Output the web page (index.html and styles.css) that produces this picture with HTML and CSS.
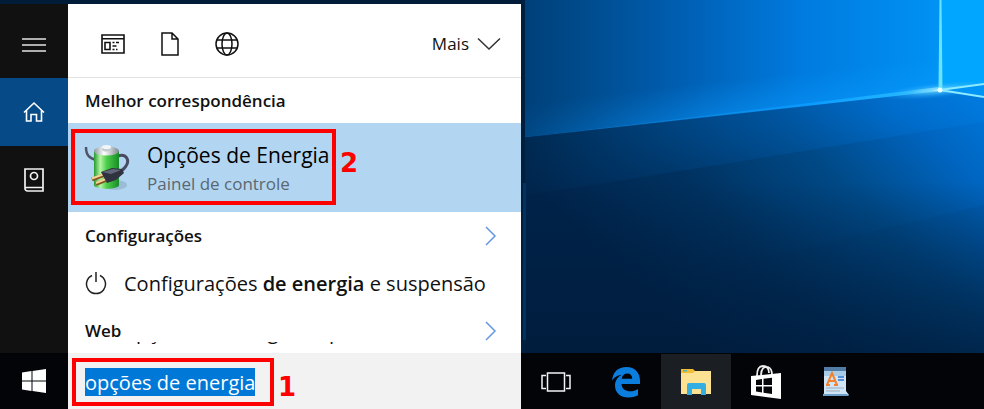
FILE: index.html
```html
<!DOCTYPE html>
<html lang="pt-BR">
<head>
    <meta charset="UTF-8">
    <meta name="viewport" content="width=device-width, initial-scale=1.0">
    <title>Opções de Energia</title>
    <link rel="stylesheet" href="styles.css">
</head>
<body>

    <main class="desktop">
        <section class="start-menu">
            <nav class="sidebar">
                <button type="button" class="side-button menu-button" aria-label="Menu">
                    <svg width="24" height="16" viewBox="0 0 24 16" fill="none" stroke="#e4e4e4" stroke-width="1.5">
                        <path d="M0 2h24M0 8h24M0 14h24"/>
                    </svg>
                </button>
                <button type="button" class="side-button active" aria-label="Início">
                    <svg width="22" height="22" viewBox="0 0 22 22" fill="none" stroke="#fff" stroke-width="1.6">
                        <path d="M1 11.5 11 2l10 9.500M3.500 9.500V20h4.500v-6.500h5.500V20H18.500V9.500"/>
                    </svg>
                </button>
                <button type="button" class="side-button" aria-label="Caderno">
                    <svg width="20" height="24" viewBox="0 0 20 24" fill="none" stroke="#f2f2f2" stroke-width="1.7">
                        <path d="M1 20V1h18v22H3.500A2.500 2.500 0 0 1 1 20.500a1.500 1.500 0 0 1 1.500-1H19"/>
                        <circle cx="10" cy="8" r="3.500"/>
                    </svg>
                </button>
            </nav>

            <div class="results">
                <header class="filters">
                    <button type="button" class="filter" aria-label="Aplicativos">
                        <svg width="24" height="20" viewBox="0 0 24 20" fill="none" stroke="#111" stroke-width="1.6">
                            <path d="M1 1h22v18H1zM1 4.800h22M4 8.500h5v7H4zM11.500 8.500h2M15 8.500h3M11.500 12h4M11.500 15.500h2M15 15.500h1.500"/>
                        </svg>
                    </button>
                    <button type="button" class="filter" aria-label="Documentos">
                        <svg width="18" height="24" viewBox="0 0 18 24" fill="none" stroke="#111" stroke-width="1.500">
                            <path d="M1 1h10l6 6v16H1zM11 1v6h6"/>
                        </svg>
                    </button>
                    <button type="button" class="filter" aria-label="Web">
                        <svg width="24" height="24" viewBox="0 0 24 24" fill="none" stroke="#111" stroke-width="1.500">
                            <circle cx="12" cy="12" r="11"/>
                            <ellipse cx="12" cy="12" rx="5" ry="11"/>
                            <path d="M2 8h20M2 16h20"/>
                        </svg>
                    </button>
                    <button type="button" class="more">
                        Mais
                        <svg width="24" height="14" viewBox="0 0 24 14" fill="none" stroke="#333" stroke-width="1.500">
                            <path d="M1 1.500 12 12 23 1.500"/>
                        </svg>
                    </button>
                </header>

                <h2 class="section-title">Melhor correspondência</h2>

                <a href="#" class="best-match">
                    <svg class="battery" width="46" height="48" viewBox="0 0 46 48">
                        <defs>
                            <linearGradient id="green">
                                <stop offset="0" stop-color="#259b2c"/>
                                <stop offset=".25" stop-color="#b5f5a5"/>
                                <stop offset=".5" stop-color="#4fcf4c"/>
                                <stop offset="1" stop-color="#168c25"/>
                            </linearGradient>
                            <linearGradient id="metal">
                                <stop offset="0" stop-color="#8d979d"/>
                                <stop offset=".4" stop-color="#fff"/>
                                <stop offset="1" stop-color="#7d888e"/>
                            </linearGradient>
                        </defs>
                        <ellipse cx="31" cy="41" rx="12" ry="5" fill="#7695ad" opacity=".4"/>
                        <path d="M2 3c0 8 3 11 10 13" fill="none" stroke="#515469" stroke-width="2.500"/>
                        <path d="M34 12c8-3 12 4 8 10-2 4-6 5-9 8" fill="none" stroke="#494c61" stroke-width="3"/>
                        <path d="M10 7v34c0 5 25 5 25 0V7z" fill="url(#green)"/>
                        <ellipse cx="22.500" cy="7" rx="12.500" ry="4.500" fill="url(#metal)"/>
                        <path d="M18 3v3c2 2 7 2 9 0V3z" fill="#c3ccd1"/>
                        <ellipse cx="22.500" cy="3" rx="4.500" ry="2" fill="#f2f6f8"/>
                        <path d="m20 31-12 4.500M23 35.500l-11 4.500" stroke="#80561e" stroke-width="4"/>
                        <path d="m20 30-12 4.500M23 34.500l-11 4.500" stroke="#f1d596" stroke-width="2.200"/>
                        <path d="m17 28 11-4 10 1 2 4-8 7-9 3z" fill="#30323f"/>
                        <path d="m18 28 11-3 8 1-10 4z" fill="#62667a"/>
                    </svg>
                    <span class="match-text">
                        <span class="match-name">Opções de Energia</span>
                        <span class="match-type">Painel de controle</span>
                    </span>
                    <span class="mark mark-match"></span>
                    <span class="step step-match">2</span>
                </a>

                <h2 class="section-title group-title">
                    Configurações
                    <svg width="12" height="20" viewBox="0 0 12 20" fill="none" stroke="#6697e2" stroke-width="1.500">
                        <path d="m1 1 9 9-9 9"/>
                    </svg>
                </h2>
                <a href="#" class="result">
                    <svg width="22" height="24" viewBox="0 0 22 24" fill="none" stroke="#222" stroke-width="1.500">
                        <path d="M7 4.500a9.500 9.500 0 1 0 8 0M11 1v10"/>
                    </svg>
                    <span>Configurações <b>de energia</b> e suspensão</span>
                </a>
                <h2 class="section-title group-title web-title">
                    Web
                    <svg width="12" height="20" viewBox="0 0 12 20" fill="none" stroke="#6697e2" stroke-width="1.500">
                        <path d="m1 1 9 9-9 9"/>
                    </svg>
                </h2>
                <!-- scrolled under the search box, only the descenders show -->
                <div class="result-cut"><span>opções de energia do pc</span></div>
            </div>
        </section>

        <svg class="wallpaper" viewBox="0 0 463 353" preserveAspectRatio="none">
            <defs>
                <linearGradient id="sky">
                    <stop offset="0" stop-color="#003f78"/>
                    <stop offset=".12" stop-color="#004a8a"/>
                    <stop offset=".35" stop-color="#005fb3"/>
                    <stop offset=".6" stop-color="#007ade"/>
                    <stop offset=".88" stop-color="#0090f2"/>
                    <stop offset="1" stop-color="#00a4ff"/>
                </linearGradient>
                <linearGradient id="floor" gradientUnits="userSpaceOnUse" x1="180" y1="353" x2="440" y2="90">
                    <stop offset="0" stop-color="#00234a"/>
                    <stop offset=".3" stop-color="#00315f"/>
                    <stop offset=".6" stop-color="#004a88"/>
                    <stop offset=".85" stop-color="#0065c0"/>
                    <stop offset="1" stop-color="#0074d6"/>
                </linearGradient>
                <linearGradient id="band">
                    <stop offset="0" stop-color="#00284f"/>
                    <stop offset=".25" stop-color="#003d74"/>
                    <stop offset=".55" stop-color="#0055a0"/>
                    <stop offset=".8" stop-color="#0070d0"/>
                    <stop offset="1" stop-color="#007de2"/>
                </linearGradient>
                <linearGradient id="bandFade" gradientUnits="userSpaceOnUse" x1="200" y1="115" x2="208" y2="166">
                    <stop offset="0" stop-color="#fff"/>
                    <stop offset="1" stop-color="#555"/>
                </linearGradient>
                <linearGradient id="glow" gradientUnits="userSpaceOnUse" x1="200" y1="80" x2="204" y2="116">
                    <stop offset="0" stop-color="#0a9cff" stop-opacity="0"/>
                    <stop offset="1" stop-color="#0a9cff" stop-opacity=".45"/>
                </linearGradient>
                <linearGradient id="glowFade">
                    <stop offset="0" stop-color="#333"/>
                    <stop offset=".5" stop-color="#fff"/>
                </linearGradient>
                <linearGradient id="beam">
                    <stop offset="0" stop-color="#0f74c8" stop-opacity=".3"/>
                    <stop offset=".7" stop-color="#0b9cff"/>
                    <stop offset=".93" stop-color="#25bbff"/>
                    <stop offset="1" stop-color="#dffcff"/>
                </linearGradient>
                <linearGradient id="shade" x1="0" y1="0" x2="0" y2="1">
                    <stop offset=".35" stop-color="#001a38" stop-opacity="0"/>
                    <stop offset="1" stop-color="#001a38" stop-opacity=".7"/>
                </linearGradient>
                <radialGradient id="flare">
                    <stop offset="0" stop-color="#d8ffff"/>
                    <stop offset=".15" stop-color="#65d4ff" stop-opacity=".8"/>
                    <stop offset="1" stop-color="#109cff" stop-opacity="0"/>
                </radialGradient>
                <mask id="bandMask"><path d="M0 138 419 90 463 97V122L60 187 0 196z" fill="url(#bandFade)"/></mask>
                <mask id="glowMask"><path d="M0 90 419 42V90L0 138z" fill="url(#glowFade)"/></mask>
            </defs>
            <path d="M0 0h463v140H0z" fill="url(#sky)"/>
            <path d="M0 90 419 42V90L0 138z" fill="url(#glow)" mask="url(#glowMask)"/>
            <path d="M420 0h43v90h-43z" fill="#00a6ff"/>
            <path d="M0 138 419 90 463 97V353H0z" fill="url(#floor)"/>
            <path d="M0 138 419 90 463 97V353H0z" fill="url(#band)" mask="url(#bandMask)"/>
            <path d="M463 205 350 232 200 270 0 353H463z" fill="#00284f" opacity=".07"/>
            <path d="M0 138 419 90 463 97V353H0z" fill="url(#shade)"/>
            <path d="M0 138 419 87V91z" fill="url(#beam)"/>
            <ellipse cx="418" cy="90" rx="60" ry="8" fill="url(#flare)" transform="rotate(-6 418 90)"/>
            <path d="M419 90 463 84V97z" fill="#0094f4"/>
            <path d="M419 90 463 84M419 90 463 97" stroke="#8cebff" stroke-width="2"/>
            <path d="M418.500 0h2l1 90h-4z" fill="#69e4fa"/>
            <circle cx="419" cy="90" r="2.500" fill="#e9ffff"/>
            <path d="M0 0h4v353H0z" fill="#001f3e"/>
            <path d="M2 183h3v157H2z" fill="#00335f"/>
        </svg>
    </main>

    <footer class="taskbar">
        <button type="button" class="start-button" aria-label="Iniciar">
            <svg width="24" height="24" viewBox="0 0 24 24" fill="#fff">
                <path d="M0 3.500 9.500 2v9.500H0zM10.500 1.900 24 0v11.500H10.500zM0 12.500h9.500V22L0 20.600zM10.500 12.500H24V24l-13.500-1.900z"/>
            </svg>
        </button>
        <form class="search">
            <input type="text" class="search-input" value="opções de energia" aria-label="Pesquisar">
            <span class="mark mark-search"></span>
            <span class="step step-search">1</span>
        </form>
        <div class="tasks">
            <button type="button" class="task" aria-label="Visão de tarefas">
                <svg width="30" height="20" viewBox="0 0 30 20" fill="none" stroke="#f4f4f4" stroke-width="1.500">
                    <path d="M6.500 1h17v18h-17zM5 3.500H1v13h4M25 3.500h4v13h-4"/>
                </svg>
            </button>
            <button type="button" class="task" aria-label="Microsoft Edge">
                <svg width="30" height="32" viewBox="0 0 30 32" fill="#0a7ddd">
                    <path d="M1 14.500C2 6 7 1 15.500 1 24 1 29 7 29 14.500V18H10.500c.3 5 4 7.300 8.500 7.300 3 0 5.700-.8 8-2.300v6.300c-3 1.500-6 2.200-9.500 2.200C9.500 31.500 4 27 4 19.500c0-4.500 2.500-8.500 6.500-10.500C6.500 9 3 11.500 1 14.500zM10.700 12.800h10.500c0-3.500-1.900-5.300-5-5.300-3 0-4.900 2-5.500 5.300z"/>
                </svg>
            </button>
            <button type="button" class="task open" aria-label="Explorador de Arquivos">
                <svg width="32" height="28" viewBox="0 0 32 28">
                    <path d="M1 1h12l2 2h15v4H1z" fill="#f2bc34"/>
                    <path d="M3 2h4v1.500H3z" fill="#4fb9ae"/>
                    <path d="M1 5h12l2-2h16v23H1z" fill="#fde294"/>
                    <path d="M7 27V17q0-2 2-2h15q2 0 2 2v10h-5v-6h-9v6z" fill="#35aee3"/>
                </svg>
            </button>
            <button type="button" class="task" aria-label="Loja">
                <svg width="32" height="36" viewBox="0 0 32 36">
                    <path d="M7 12C7 5 9 2 13 2c4 0 6 3 6 7M11 11c0-6 3-9 7-8 3 1 4 4 4 8" fill="none" stroke="#eee" stroke-width="1.800"/>
                    <path d="M1 12 31 9v26L1 31z" fill="#fff"/>
                    <path d="m6 16 6-1v6H6zM13.500 14.800l8.500-1V21h-8.500zM6 22.500h6v6l-6-1zM13.500 22.500H22V30l-8.500-1.200z" fill="#05070b"/>
                </svg>
            </button>
            <button type="button" class="task" aria-label="WordPad">
                <svg width="28" height="32" viewBox="0 0 28 32">
                    <path d="M2 2h22v23l3 4-3 1H1l1-3z" fill="#cfe4f5"/>
                    <path d="M2 1h22v4H2z" fill="#507ca5"/>
                    <path d="M2 5h22v5H2z" fill="#a8cbe8"/>
                    <path d="M16 11h6M16 14h6" stroke="#568fd7" stroke-width="2"/>
                    <path d="M4 22h18M4 25h14" stroke="#9badbd"/>
                    <path d="m5 19 5-12 5 12M7 15h7M4 19h4M12 19h4" fill="none" stroke="#f3822f" stroke-width="2"/>
                    <path d="M1 28h24l2 2H1z" fill="#6e9fc8"/>
                </svg>
            </button>
        </div>
    </footer>

</body>
</html>
```
FILE: styles.css
```css
* {
    box-sizing: border-box;
}

body {
    margin: 0;
    min-height: 100vh;
    display: flex;
    flex-direction: column;
    font-family: "Open Sans", "Noto Sans", sans-serif;
    background-color: #001c38;
    color: #111;
}

button {
    display: flex;
    align-items: center;
    justify-content: center;
    padding: 0;
    border: none;
    background: none;
    font-family: inherit;
    color: inherit;
    cursor: pointer;
}

a {
    color: inherit;
    text-decoration: none;
}

svg {
    flex-shrink: 0;
}

.desktop {
    flex: 1;
    display: grid;
    grid-template-columns: 521px 1fr;
}

.wallpaper {
    width: 100%;
    height: 100%;
    min-height: 0;
}

/* start menu */
.start-menu {
    display: flex;
    padding-top: 4px;
}

.sidebar {
    width: 68px;
    background-color: #111;
}

.side-button {
    width: 100%;
    height: 68px;
}

.menu-button {
    height: 74px;
    padding-top: 8px;
}

.side-button.active {
    background-color: #064b87;
}

.results {
    flex: 1;
    background-color: #fff;
}

.filters {
    display: flex;
    align-items: center;
    gap: 36px;
    height: 74px;
    padding: 6px 20px 0 33px;
    border-bottom: 1px solid #e3e3e3;
}

.more {
    gap: 8px;
    margin-left: auto;
    font-size: 17px;
}

.section-title {
    display: flex;
    align-items: center;
    height: 45px;
    margin: 0;
    padding: 0 24px 0 17px;
    font-size: 17px;
    font-weight: 600;
}

.group-title {
    justify-content: space-between;
    height: 47px;
}

.web-title {
    height: 35px;
    padding-top: 12px;
}

.best-match {
    position: relative;
    display: flex;
    align-items: center;
    gap: 17px;
    height: 89px;
    padding: 0 16px;
    background-color: #b2d6f2;
}

.match-text {
    display: flex;
    flex-direction: column;
}

.match-name {
    font-size: 21px;
    line-height: 32px;
    color: #000;
}

.match-type {
    font-size: 17px;
    line-height: 26px;
    color: #5b6770;
}

.result {
    display: flex;
    align-items: center;
    gap: 17px;
    height: 48px;
    padding: 0 17px;
    font-size: 20px;
    white-space: nowrap;
}

.result b {
    font-weight: 600;
}

.result-cut {
    display: flex;
    align-items: flex-end;
    height: 3px;
    margin-bottom: 8px;
    padding-left: 56px;
    overflow: hidden;
    font-size: 20px;
    line-height: 27px;
}

/* numbered marks over the menu */
.mark {
    position: absolute;
    border: 4px solid #f00;
}

.mark-match {
    left: 3px;
    top: 6px;
    width: 265px;
    height: 76px;
}

.mark-search {
    left: 4px;
    top: 5px;
    width: 202px;
    height: 48px;
}

.step {
    position: absolute;
    font-family: "DejaVu Sans", sans-serif;
    font-size: 26px;
    line-height: 30px;
    font-weight: bold;
    color: #f00;
}

.step-match {
    left: 272px;
    top: 25px;
}

.step-search {
    left: 210px;
    top: 19px;
}

/* taskbar */
.taskbar {
    display: flex;
    height: 56px;
    background-color: #020408;
}

.start-button {
    width: 68px;
}

.search {
    position: relative;
    display: flex;
    align-items: center;
    width: 453px;
    padding: 2px 17px 0;
    background-color: #f2f2f2;
}

.search-input {
    field-sizing: content;
    height: 28px;
    padding: 0;
    border: none;
    outline: none;
    background-color: #0078d7;
    font-family: inherit;
    font-size: 20px;
    color: #fff;
}

.tasks {
    display: flex;
    padding-top: 1px;
}

.task {
    width: 70px;
}

.task.open {
    background-color: #1b1e22;
}
```
